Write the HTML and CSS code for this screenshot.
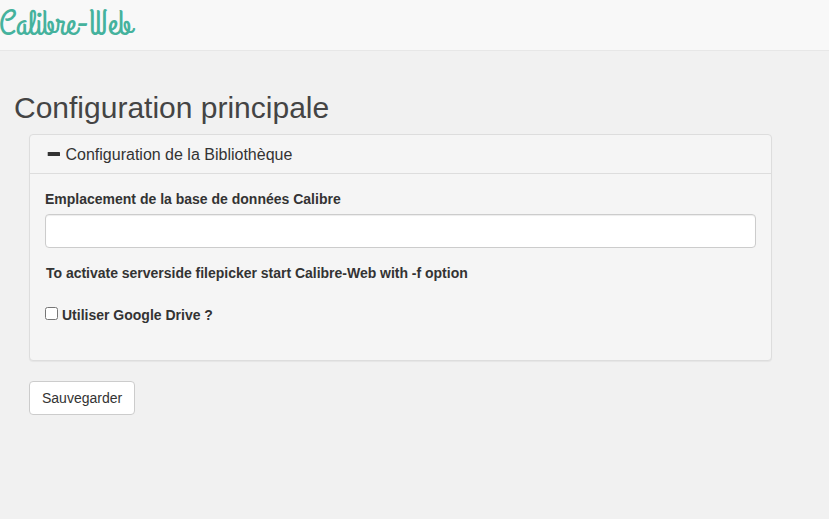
FILE: index.html
```html
<!DOCTYPE html>
<html lang="fr">
<head>
  <meta charset="utf-8">
  <title>Calibre-Web | Configuration principale</title>
  <link rel="stylesheet" href="styles.css">
</head>
<body>
  <nav class="navbar">
    <a class="navbar-brand" href="#">Calibre-Web</a>
  </nav>

  <div class="container">
    <h2>Configuration principale</h2>
    <form class="config-form">
      <div class="panel">
        <div class="panel-heading">
          <h4 class="panel-title">
            <svg class="icon-minus" width="16" height="16" viewBox="0 0 16 16">
              <rect x="1.7" y="5" width="12.3" height="4" rx="0.6" fill="currentColor"/>
            </svg>
            <span>Configuration de la Bibliothèque</span>
          </h4>
        </div>
        <div class="panel-body">
          <div class="form-group">
            <label for="calibre_dir">Emplacement de la base de données Calibre</label>
            <input type="text" class="form-control" id="calibre_dir">
          </div>
          <div class="form-group filepicker-hint">To activate serverside filepicker start Calibre-Web with -f option</div>
          <div class="form-group checkbox-group">
            <input type="checkbox" id="use_google_drive">
            <label for="use_google_drive">Utiliser Google Drive ?</label>
          </div>
        </div>
      </div>
      <button type="button" class="btn">Sauvegarder</button>
    </form>
  </div>
</body>
</html>
```
FILE: styles.css
```css
* {
  box-sizing: border-box;
}

body {
  margin: 0;
  background: #f1f1f1;
  color: #333;
  font-family: "Helvetica Neue", Helvetica, Arial, "Liberation Sans", sans-serif;
  font-size: 14px;
  line-height: 20px;
}

.navbar {
  height: 51px;
  margin-bottom: 20px;
  background: #f8f8f8;
  border-bottom: 1px solid #e7e7e7;
}

.navbar-brand {
  display: inline-block;
  margin-left: -1px;
  padding-top: 4px;
  color: #45b29d;
  font-family: "Grand Hotel", Lato, sans-serif;
  font-size: 35px;
  line-height: 42px;
  text-decoration: none;
  white-space: nowrap;
}

.container {
  padding: 20px 14px 0;
}

h2 {
  margin: 0 0 10px;
  color: #444;
  font-size: 30px;
  font-weight: 500;
  line-height: 33px;
}

.config-form {
  width: 743px;
  margin-left: 15px;
}

.panel {
  height: 227px;
  margin-bottom: 20px;
  background: #f5f5f5;
  border: 1px solid #ddd;
  border-radius: 4px;
  box-shadow: 0 1px 1px rgba(0, 0, 0, 0.05);
}

.panel-heading {
  padding: 11px 15px 9px;
  border-bottom: 1px solid #ddd;
}

.panel-title {
  display: flex;
  align-items: center;
  gap: 3.5px;
  margin: 0;
  font-size: 16px;
  font-weight: 500;
  line-height: 18px;
}

.icon-minus {
  margin-left: 1px;
}

.panel-body {
  padding: 15px;
}

.form-group {
  margin-bottom: 15px;
}

label,
.filepicker-hint {
  font-weight: 700;
}

.form-group > label {
  display: block;
  margin-bottom: 5px;
}

.form-control {
  display: block;
  width: 100%;
  height: 34px;
  padding: 6px 12px;
  background: #fff;
  border: 1px solid #ccc;
  border-radius: 4px;
  box-shadow: inset 0 1px 1px rgba(0, 0, 0, 0.075);
  font: inherit;
}

.filepicker-hint {
  margin-bottom: 22px;
  padding-left: 1px;
  letter-spacing: -0.015px;
}

.checkbox-group {
  display: flex;
  align-items: flex-start;
  gap: 4px;
}

.checkbox-group input {
  width: 13px;
  height: 13px;
  margin: 2px 0 0;
}

.btn {
  display: inline-block;
  height: 34px;
  padding: 6px 12px;
  background: #fff;
  border: 1px solid #ccc;
  border-radius: 4px;
  color: #333;
  font: inherit;
}
```
